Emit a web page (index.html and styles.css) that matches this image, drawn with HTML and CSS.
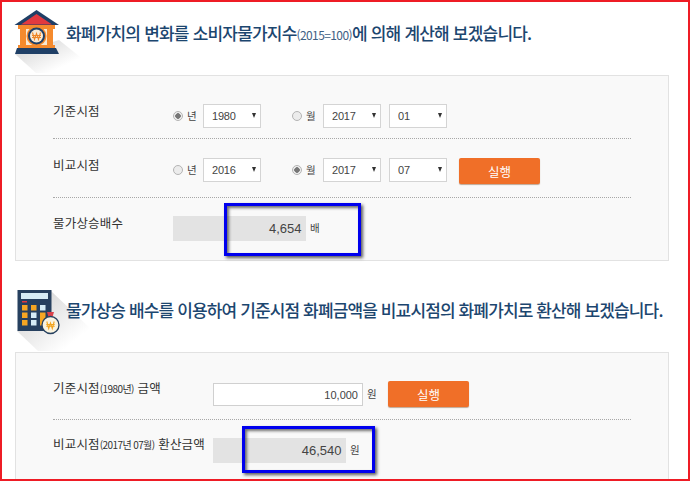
FILE: index.html
```html
<!DOCTYPE html>
<html lang="ko">
<head>
<meta charset="utf-8">
<title>화폐가치 계산</title>
<link rel="stylesheet" href="styles.css">
</head>
<body>
<div class="frame">
  <header class="head head-first">
    <svg class="icon icon-bank" width="70" height="66" viewBox="15 10 70 66" aria-hidden="true">
      <defs>
        <linearGradient id="sh1" x1="0" y1="0" x2="1" y2="1">
          <stop offset="0" stop-color="#cfcfcf"/>
          <stop offset="0.75" stop-color="#ffffff"/>
        </linearGradient>
      </defs>
      <polygon points="15,54 59,40 84,60 84,73 36,73" fill="url(#sh1)"/>
      <polygon points="36.5,10 59,25 14.500,25" fill="#1f3f66"/>
      <polygon points="36.500,14 52,24.500 21,24.500" fill="#e2393f"/>
      <rect x="18" y="25" width="37" height="4" fill="#f58a2d"/>
      <rect x="25" y="29" width="24" height="18" fill="#f7e9d5"/>
      <rect x="20" y="29" width="6" height="18" fill="#f58a2d"/>
      <rect x="47" y="29" width="6" height="18" fill="#f58a2d"/>
      <rect x="18" y="45" width="37" height="3" fill="#f58a2d"/>
      <path d="M17 48H56L59 54H15Z" fill="#1f3f66"/>
      <circle cx="36.500" cy="36" r="10" fill="#f58a2d"/>
      <circle cx="36.500" cy="36" r="8.500" fill="#1f3f66"/>
      <circle cx="36.500" cy="36" r="6.500" fill="#f7e9d5"/>
      <path d="M32.500 32.500L34.500 39.500L36.500 33.500L38.500 39.500L40.500 32.500M32 35.500H41M32 37.500H41" fill="none" stroke="#ee8526" stroke-width="1.100"/>
    </svg>
    <h2 class="title">화폐가치의 변화를 소비자물가지수<small>(2015=100)</small>에 의해 계산해 보겠습니다.</h2>
  </header>

  <section class="panel">
    <div class="row row-a">
      <div class="label label-wide">기준시점</div>
      <label class="choice"><input type="radio" name="a" checked>년</label>
      <span class="select"><select><option>1980</option></select></span>
      <label class="choice choice-month"><input type="radio" name="a">월</label>
      <span class="select"><select><option>2017</option></select></span>
      <span class="select select-last"><select><option>01</option></select></span>
    </div>
    <div class="row row-b">
      <div class="label label-wide">비교시점</div>
      <label class="choice"><input type="radio" name="b">년</label>
      <span class="select"><select><option>2016</option></select></span>
      <label class="choice choice-month"><input type="radio" name="b" checked>월</label>
      <span class="select"><select><option>2017</option></select></span>
      <span class="select select-last"><select><option>07</option></select></span>
      <button class="run run-b" type="button">실행</button>
    </div>
    <div class="row row-c row-end">
      <div class="label label-wide">물가상승배수</div>
      <output class="result">4,654</output>
      <span class="unit">배</span>
    </div>
  </section>

  <header class="head head-second">
    <svg class="icon icon-calc" width="75" height="62" viewBox="17 290 75 62" aria-hidden="true">
      <defs>
        <linearGradient id="sh2" x1="0" y1="0" x2="1" y2="1">
          <stop offset="0" stop-color="#cdcdcd"/>
          <stop offset="0.8" stop-color="#ffffff"/>
        </linearGradient>
      </defs>
      <polygon points="17,331 51,291 92,330 92,351 38,351" fill="url(#sh2)"/>
      <rect x="17.500" y="290" width="34" height="41" fill="#26405f"/>
      <rect x="21" y="293" width="27" height="6" fill="#d6ecf6"/>
      <rect x="22" y="301" width="5" height="1.500" fill="#e2393f"/>
      <g fill="#f5a623">
        <rect x="22" y="305" width="5.500" height="5.500"/>
        <rect x="31" y="305" width="5.500" height="5.500"/>
        <rect x="22" y="312.500" width="5.500" height="5.500"/>
        <rect x="22" y="320" width="5.500" height="5.500"/>
        <rect x="40" y="312.500" width="5.500" height="13"/>
      </g>
      <g fill="#d6ecf6">
        <rect x="40" y="305" width="5.500" height="5.500"/>
        <rect x="31" y="312.500" width="5.500" height="5.500"/>
        <rect x="31" y="320" width="5.500" height="5.500"/>
      </g>
      <path d="M47 312L54 312L52.500 317H48.500Z" fill="#d9414a"/>
      <circle cx="50.500" cy="325" r="8.500" fill="#f9f3df" stroke="#26405f" stroke-width="1.300"/>
      <path d="M46.800 321.500L48.700 328.500L50.500 323L52.300 328.500L54.200 321.500M46.300 324.500H54.700M46.300 326.300H54.700" fill="none" stroke="#f2a41f" stroke-width="1.100"/>
    </svg>
    <h2 class="title">물가상승 배수를 이용하여 기준시점 화폐금액을 비교시점의 화폐가치로 환산해 보겠습니다.</h2>
  </header>

  <section class="panel panel-open">
    <div class="row row-d">
      <div class="label label-xl">기준시점<small>(1980년)</small> 금액</div>
      <input class="amount" type="text" value="10,000">
      <span class="unit">원</span>
      <button class="run run-d" type="button">실행</button>
    </div>
    <div class="row row-e row-end">
      <div class="label label-xl">비교시점<small>(2017년 07월)</small> 환산금액</div>
      <output class="result">46,540</output>
      <span class="unit">원</span>
    </div>
  </section>

  <div class="mark mark-one"></div>
  <div class="mark mark-two"></div>
</div>
</body>
</html>
```
FILE: styles.css
```css
* { box-sizing: border-box; }
html, body { margin: 0; padding: 0; background: #fff; }
body {
  width: 690px;
  height: 481px;
  overflow: hidden;
  font-family: "Noto Sans CJK KR", "Noto Sans", sans-serif;
  color: #333;
}
.frame {
  position: relative;
  width: 690px;
  height: 481px;
  overflow: hidden;
  border: 2px solid #ee1c25;
  padding: 0 19px 0 13px;
}
.head { position: relative; display: flex; align-items: flex-start; }
.head-first { height: 73px; }
.head-second { height: 91px; }
.icon { position: absolute; left: 0; overflow: visible; }
.icon-bank { top: 8px; }
.icon-calc { left: 2px; top: 29px; }
.title {
  position: relative;
  margin: 0 0 0 51px;
  font-size: 17px;
  font-weight: 500;
  letter-spacing: -0.870px;
  line-height: 24px;
  color: #1c466f;
  white-space: nowrap;
}
.head-first .title { top: 19px; letter-spacing: -0.800px; }
.head-second .title { top: 37px; }
.title small { font-size: 12px; font-weight: 400; letter-spacing: -0.600px; color: #3f6184; }
.panel {
  background: #f9f9f9;
  border: 1px solid #e2e2e2;
  height: 186px;
  padding: 0 37px;
}
.panel-open { height: 200px; }
.row {
  display: flex;
  align-items: flex-start;
  border-bottom: 1px dotted #a8a8a8;
  font-size: 11px;
}
.row-end { border-bottom: 0; }
.row-a { height: 63px; padding-top: 28px; }
.row-b { height: 59px; padding-top: 19px; }
.row-c { padding-top: 18px; }
.row-d { height: 67px; padding-top: 30px; }
.row-e { padding-top: 18px; }
.label {
  flex: none;
  font-size: 12.500px;
  line-height: 20px;
  color: #333;
  letter-spacing: 0.200px;
  white-space: nowrap;
}
.label small { font-size: 10px; letter-spacing: -0.600px; }
.label-wide { width: 120px; margin-top: -3px; }
.label-xl { width: 160px; margin-top: -3px; }
.row-d .label-xl { margin-top: -5px; }
.row-e .label-xl { margin-top: -4px; }
.choice {
  display: flex;
  align-items: center;
  height: 23px;
  width: 30px;
  font-size: 10.500px;
  color: #444;
}
.choice-month { width: 31px; margin-left: 31px; }
.choice input {
  appearance: none;
  -webkit-appearance: none;
  width: 10px;
  height: 10px;
  margin: 0 4px 0 0;
  border: 1px solid #b4b4b4;
  border-radius: 50%;
  background: #ececec;
  flex: none;
}
.choice input:checked { background: radial-gradient(circle, #777 0 2.500px, #efefef 3px); }
.select {
  position: relative;
  display: block;
  width: 58px;
  height: 24px;
  margin-right: 0;
}
.select-last { margin-left: 8px; }
.select::after {
  content: "";
  position: absolute;
  right: 5px;
  top: 9px;
  border-left: 2.500px solid transparent;
  border-right: 2.500px solid transparent;
  border-top: 5px solid #333;
  pointer-events: none;
}
.select select {
  appearance: none;
  -webkit-appearance: none;
  display: block;
  width: 100%;
  height: 100%;
  margin: 0;
  padding: 0 0 0 8px;
  background: #fff;
  border: 1px solid #d4d4d4;
  border-radius: 0;
  font-family: "Liberation Sans", sans-serif;
  font-size: 11px;
  letter-spacing: -0.200px;
  color: #444;
}
.run {
  flex: none;
  width: 81px;
  height: 26px;
  margin: 0;
  padding: 0;
  border: 0;
  border-radius: 2px;
  background: #f06f28;
  box-shadow: 0 1px 1px rgba(120, 70, 30, 0.45);
  font-family: "Noto Sans CJK KR", sans-serif;
  font-size: 12.500px;
  color: #fff;
}
.run-b { margin-left: 12px; }
.run-d { margin: -2px 0 0 1px; }
.result {
  display: block;
  flex: none;
  width: 133px;
  height: 25px;
  padding-right: 4.500px;
  background: #e3e3e3;
  text-align: right;
  font-family: "Liberation Sans", sans-serif;
  font-size: 13px;
  line-height: 25px;
  color: #444;
}
.unit {
  flex: none;
  margin-left: 4px;
  width: 20px;
  font-size: 10.500px;
  line-height: 24px;
  color: #444;
}
.amount {
  flex: none;
  width: 150px;
  height: 23px;
  margin: 0;
  padding: 0 4px 0 0;
  background: #fff;
  border: 1px solid #d0d0d0;
  border-radius: 0;
  text-align: right;
  font-family: "Liberation Sans", sans-serif;
  font-size: 11px;
  color: #444;
}
.row-d .unit { line-height: 22px; }
.mark {
  position: absolute;
  border: 3px solid #0000ee;
  box-shadow: 2px 2px 3px rgba(40, 40, 40, 0.75), inset 2px 2px 3px rgba(40, 40, 40, 0.65);
  pointer-events: none;
}
.mark-one { left: 222px; top: 201px; width: 137px; height: 53px; }
.mark-two { left: 240px; top: 424px; width: 133px; height: 47px; }
```
